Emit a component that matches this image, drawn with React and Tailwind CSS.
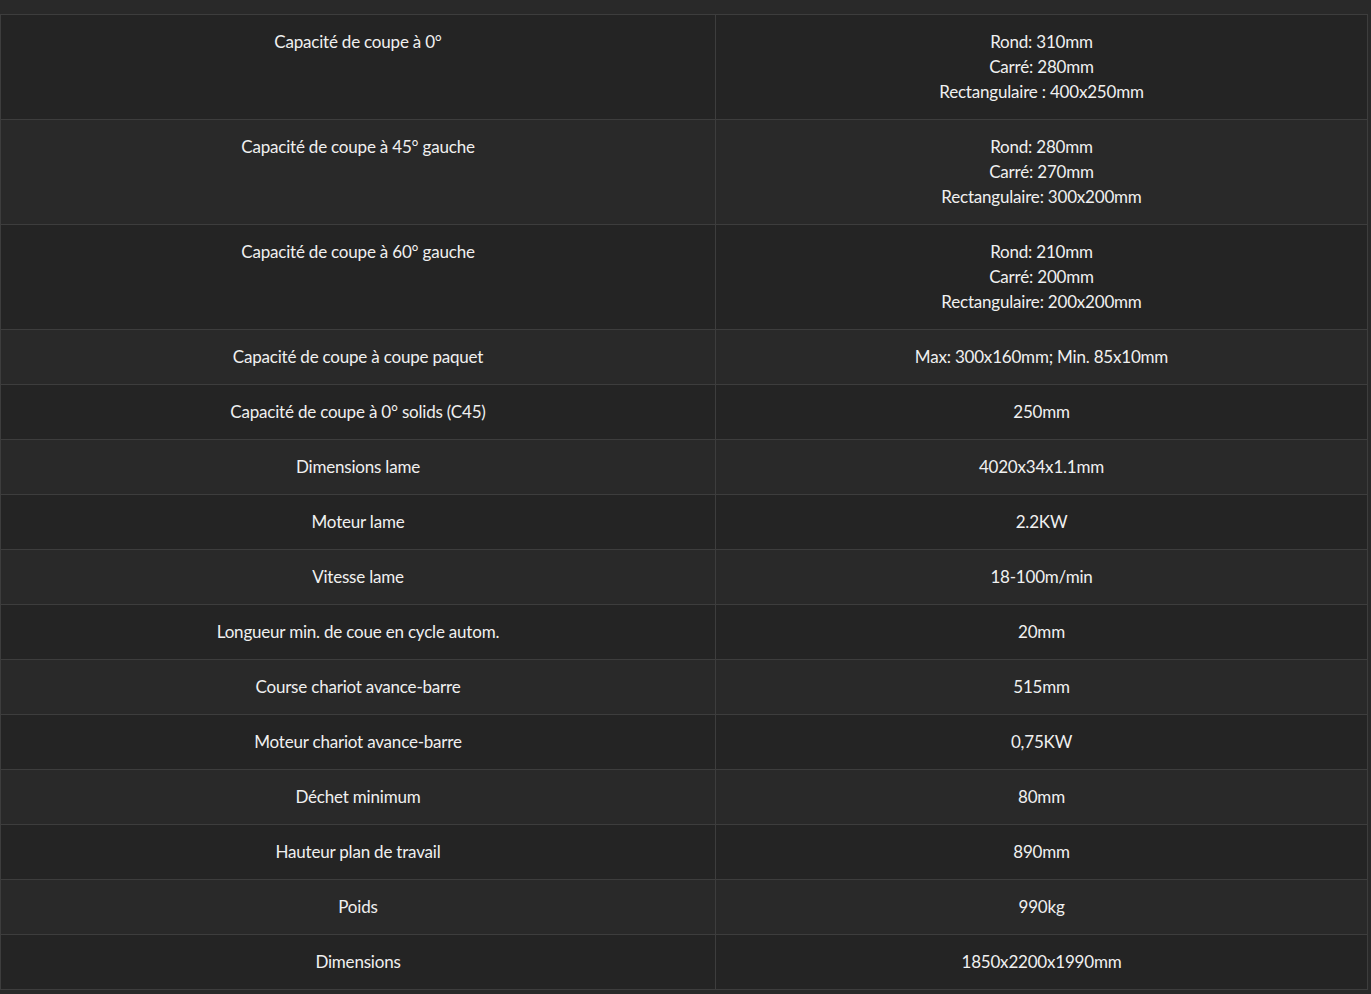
const rows = [
  ["Capacité de coupe à 0°", ["Rond: 310mm", "Carré: 280mm", "Rectangulaire : 400x250mm"]],
  ["Capacité de coupe à 45° gauche", ["Rond: 280mm", "Carré: 270mm", "Rectangulaire: 300x200mm"]],
  ["Capacité de coupe à 60° gauche", ["Rond: 210mm", "Carré: 200mm", "Rectangulaire: 200x200mm"]],
  ["Capacité de coupe à coupe paquet", ["Max: 300x160mm; Min. 85x10mm"]],
  ["Capacité de coupe à 0° solids (C45)", ["250mm"]],
  ["Dimensions lame", ["4020x34x1.1mm"]],
  ["Moteur lame", ["2.2KW"]],
  ["Vitesse lame", ["18-100m/min"]],
  ["Longueur min. de coue en cycle autom.", ["20mm"]],
  ["Course chariot avance-barre", ["515mm"]],
  ["Moteur chariot avance-barre", ["0,75KW"]],
  ["Déchet minimum", ["80mm"]],
  ["Hauteur plan de travail", ["890mm"]],
  ["Poids", ["990kg"]],
  ["Dimensions", ["1850x2200x1990mm"]],
];

export default function App() {
  return (
    <div className="min-h-screen bg-[#292929] pt-[14px] font-['Lato',sans-serif] text-[17px] tracking-[-0.2px] leading-[25px] text-[#f0f0f0]">
      {/* Specs table */}
      <table className="w-[1368px] border-collapse">
        <tbody>
          {rows.map(([label, values], i) => (
            <tr key={label} className={i % 2 === 0 ? "bg-[#242424]" : "bg-[#292929]"}>
              <td className="w-[715px] border border-[#3d3d3d] px-4 pt-[14px] pb-[15px] text-center align-top">
                {label}
              </td>
              <td className="border border-[#3d3d3d] px-4 pt-[14px] pb-[15px] text-center align-top">
                {values.map((v) => (
                  <div key={v}>{v}</div>
                ))}
              </td>
            </tr>
          ))}
        </tbody>
      </table>
    </div>
  );
}
